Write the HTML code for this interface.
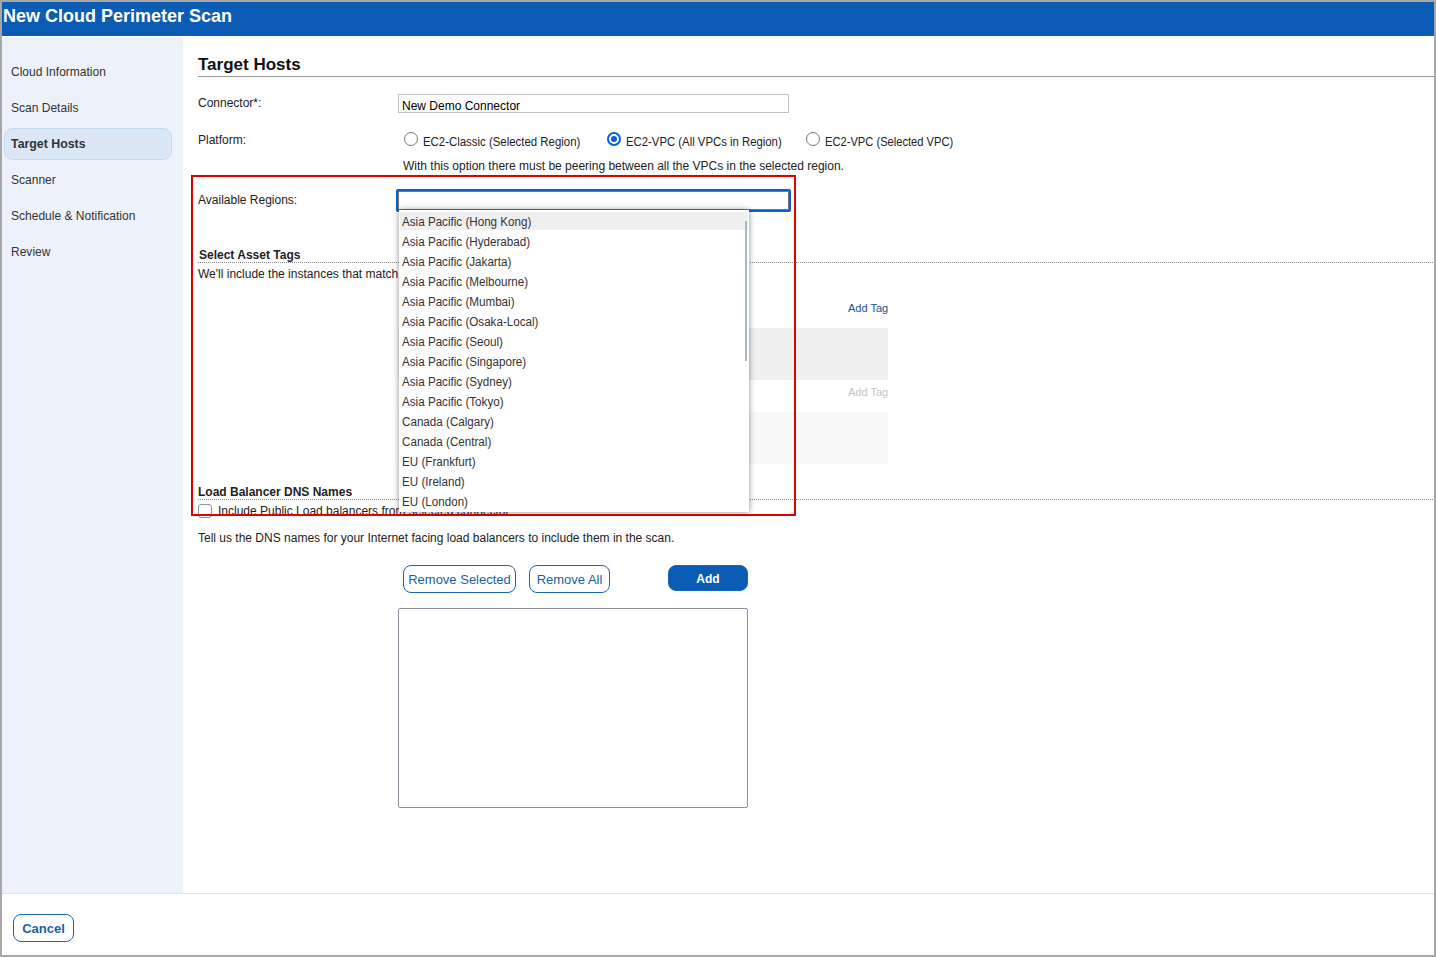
<!DOCTYPE html>
<html><head><meta charset="utf-8">
<style>
*{margin:0;padding:0;box-sizing:border-box}
html,body{width:1436px;height:957px;overflow:hidden;background:#a7a7a7;font-family:"Liberation Sans",sans-serif;color:#222}
.a{position:absolute;white-space:nowrap}
#frame{position:absolute;left:2px;top:2px;width:1432px;height:953px;background:#fff;overflow:hidden}
#hdr{position:absolute;left:0;top:0;width:1432px;height:34px;background:#0b5cb5}
#hdr .t{left:1px;top:4px;font-size:18px;font-weight:bold;color:#fff}
#side{position:absolute;left:0;top:35px;width:181px;height:856px;background:#edf2fa}
.nav{left:9px;font-size:13px;color:#333;transform:scaleX(.925);transform-origin:0 0}
#pill{position:absolute;left:2px;top:91px;width:168px;height:32px;border:1px solid #c3d9ef;border-radius:9px;background:#dbe7f5}
.lbl{font-size:12px;color:#222}
.tah{font-size:12px;color:#222}
.sd{display:inline-block;transform:scaleX(.97);transform-origin:0 0}
.sx{display:inline-block;transform:scaleX(.951);transform-origin:0 0}

.radio{position:absolute;width:14px;height:14px;border:1px solid #767676;border-radius:50%;background:#fff}
.radio.on{border:2px solid #0b5ed7}
.radio.on::after{content:"";position:absolute;left:2px;top:2px;width:6px;height:6px;border-radius:50%;background:#0b5ed7}
.dot{height:1px;background-image:linear-gradient(to right,#888 50%,transparent 50%);background-size:2px 1px}
.btn{border:1px solid #1a66b8;border-radius:8px;background:#fff;color:#1a5fa8;font-size:12px;text-align:center;line-height:27px}
.btn.fill{background:#0b5cb5;color:#fff;font-weight:bold;line-height:26px}
#redbox{position:absolute;left:189px;top:173px;width:605px;height:341px;border:2px solid #e50000}
#dd{position:absolute;left:397px;top:208px;width:350px;height:302px;padding-top:2px;background:#fff;box-shadow:0 0 6px rgba(0,0,0,.45);overflow:hidden}
#dd .it{height:18px;line-height:18px;margin:0 1px 2px;padding-left:2px;font-size:12px;color:#333}
#dd .sd{position:relative;top:1px}
#dd .it.sel{background:#efefef}
#dd .thumb{position:absolute;left:346px;top:11px;width:2px;height:140px;background:#a9b9c4}
</style></head>
<body>
<div id="frame">
  <div id="hdr"><div class="a t">New Cloud Perimeter Scan</div></div>
  <div id="side">
    <div id="pill"></div>
    <div class="a nav" style="top:27px">Cloud Information</div>
    <div class="a nav" style="top:63px">Scan Details</div>
    <div class="a nav" style="top:99px;font-weight:bold;transform:scaleX(.95)">Target Hosts</div>
    <div class="a nav" style="top:135px">Scanner</div>
    <div class="a nav" style="top:171px">Schedule &amp; Notification</div>
    <div class="a nav" style="top:207px">Review</div>
  </div>
  <div id="main">
    <div class="a" style="left:196px;top:53px;font-size:17px;font-weight:bold;color:#111">Target Hosts</div>
    <div class="a" style="left:196px;top:74px;width:1236px;height:1px;background:#9a9a9a"></div>
    <div class="a lbl" style="left:196px;top:94px">Connector*:</div>
    <div class="a" style="left:396px;top:92px;width:391px;height:19px;border:1px solid #c2c2c2;background:#fff"></div>
    <div class="a tah" style="left:400px;top:97px;color:#000">New Demo Connector</div>
    <div class="a lbl" style="left:196px;top:131px">Platform:</div>
    <div class="radio" style="left:402px;top:130px"></div>
    <div class="a tah" style="left:421px;top:133px"><span class="sx">EC2-Classic (Selected Region)</span></div>
    <div class="radio on" style="left:605px;top:130px"></div>
    <div class="a tah" style="left:624px;top:133px"><span class="sx" style="transform:scaleX(.945)">EC2-VPC (All VPCs in Region)</span></div>
    <div class="radio" style="left:804px;top:130px"></div>
    <div class="a tah" style="left:823px;top:133px"><span class="sx" style="transform:scaleX(.929)">EC2-VPC (Selected VPC)</span></div>
    <div class="a tah" style="left:401px;top:157px">With this option there must be peering between all the VPCs in the selected region.</div>

    <div class="a lbl" style="left:196px;top:191px">Available Regions:</div>

    <div class="a" style="left:197px;top:246px;font-size:12px;font-weight:bold;color:#222">Select Asset Tags</div>
    <div class="a dot" style="left:196px;top:260px;width:1236px"></div>
    <div class="a lbl" style="left:196px;top:265px">We'll include the instances that match</div>
    <div class="a tah" style="left:846px;top:300px;font-size:11px;color:#1a4f9c">Add Tag</div>
    <div class="a" style="left:396px;top:326px;width:490px;height:52px;background:#f0f0f0"></div>
    <div class="a tah" style="left:846px;top:384px;font-size:11px;color:#c4c4c4">Add Tag</div>
    <div class="a" style="left:396px;top:410px;width:490px;height:52px;background:#f8f8f8"></div>

    <div class="a" style="left:196px;top:483px;font-size:12px;font-weight:bold;color:#222">Load Balancer DNS Names</div>
    <div class="a dot" style="left:196px;top:497px;width:1236px"></div>
    <div class="a" style="left:196px;top:502px;width:14px;height:14px;border:1px solid #8f8f9d;border-radius:3px;background:#fff"></div>
    <div class="a lbl" style="left:216px;top:502px">Include Public Load balancers from selected connector</div>
    <div class="a lbl" style="left:196px;top:529px">Tell us the DNS names for your Internet facing load balancers to include them in the scan.</div>

    <div class="a btn" style="left:401px;top:563px;width:113px;height:28px;font-size:13px">Remove Selected</div>
    <div class="a btn" style="left:527px;top:563px;width:81px;height:28px;font-size:13px">Remove All</div>
    <div class="a btn fill" style="left:666px;top:563px;width:80px;height:26px">Add</div>
    <div class="a" style="left:396px;top:606px;width:350px;height:200px;border:1px solid #8f8f9d;border-radius:2px;background:#fff"></div>

    <div id="redbox"></div>
    <div class="a" style="left:394px;top:187px;width:395px;height:23px;border:2px solid #0b5ed7;border-radius:2px;background:#fff;box-shadow:inset 0 0 0 1px #767676"></div>
    <div id="dd">
      <div class="it sel"><span class="sd">Asia Pacific (Hong Kong)</span></div>
      <div class="it"><span class="sd">Asia Pacific (Hyderabad)</span></div>
      <div class="it"><span class="sd">Asia Pacific (Jakarta)</span></div>
      <div class="it"><span class="sd">Asia Pacific (Melbourne)</span></div>
      <div class="it"><span class="sd">Asia Pacific (Mumbai)</span></div>
      <div class="it"><span class="sd">Asia Pacific (Osaka-Local)</span></div>
      <div class="it"><span class="sd">Asia Pacific (Seoul)</span></div>
      <div class="it"><span class="sd">Asia Pacific (Singapore)</span></div>
      <div class="it"><span class="sd">Asia Pacific (Sydney)</span></div>
      <div class="it"><span class="sd">Asia Pacific (Tokyo)</span></div>
      <div class="it"><span class="sd">Canada (Calgary)</span></div>
      <div class="it"><span class="sd">Canada (Central)</span></div>
      <div class="it"><span class="sd">EU (Frankfurt)</span></div>
      <div class="it"><span class="sd">EU (Ireland)</span></div>
      <div class="it"><span class="sd">EU (London)</span></div>
      <div class="thumb"></div>
    </div>
  </div>
  <div class="a" style="left:0;top:891px;width:1432px;height:1px;background:#e3e3e3"></div>
  <div class="a btn" style="left:11px;top:912px;width:61px;height:28px;font-weight:bold;font-size:13px">Cancel</div>
</div>
</body></html>
